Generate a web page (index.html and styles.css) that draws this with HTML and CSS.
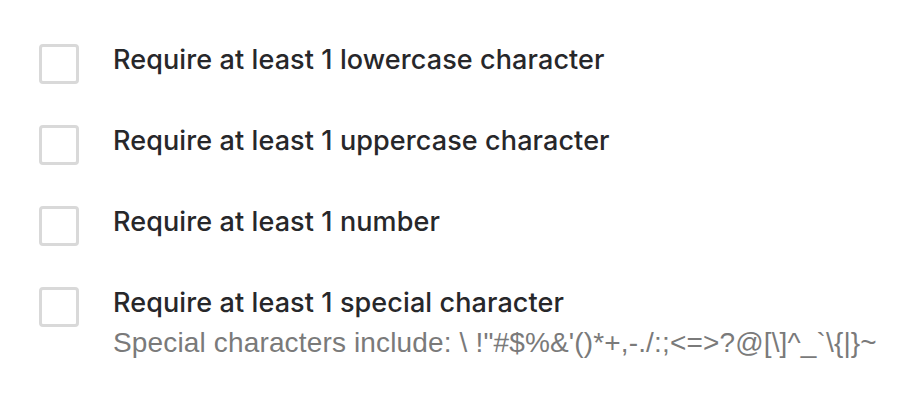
FILE: index.html
```html
<!DOCTYPE html>
<html>
<head>
<meta charset="utf-8">
<link rel="stylesheet" href="styles.css">
</head>
<body>
<ul class="rules">
  <li class="rule">
    <span class="box"></span>
    <div class="text">
      <div class="label">Require at least 1 lowercase character</div>
    </div>
  </li>
  <li class="rule">
    <span class="box"></span>
    <div class="text">
      <div class="label">Require at least 1 uppercase character</div>
    </div>
  </li>
  <li class="rule">
    <span class="box"></span>
    <div class="text">
      <div class="label">Require at least 1 number</div>
    </div>
  </li>
  <li class="rule">
    <span class="box"></span>
    <div class="text">
      <div class="label">Require at least 1 special character</div>
      <div class="hint">Special characters include: \ !"#$%&amp;'()*+,-./:;&lt;=&gt;?@[\]^_`\{|}~</div>
    </div>
  </li>
</ul>
</body>
</html>
```
FILE: styles.css
```css
html, body {
  margin: 0;
  padding: 0;
  background: #ffffff;
}
body {
  font-family: Inter, "Noto Sans", sans-serif;
}
.rules {
  list-style: none;
  margin: 0;
  padding: 44px 0 0 39px;
  display: flex;
  flex-direction: column;
  gap: 41px;
}
.rule {
  display: flex;
  align-items: flex-start;
  gap: 34px;
}
.box {
  flex: none;
  width: 34px;
  height: 34px;
  border: 3px solid #d9d9d9;
  border-radius: 4px;
}
.text {
  display: flex;
  flex-direction: column;
}
.label {
  font-size: 27px;
  font-weight: 500;
  line-height: 34px;
  color: #27272a;
  letter-spacing: 0.1px;
  margin-top: -1px;
}
.hint {
  font-family: "Liberation Sans", Arial, sans-serif;
  font-size: 28px;
  font-weight: 400;
  line-height: 34px;
  color: #7a7a7a;
  letter-spacing: 0.15px;
  margin-top: 6px;
}
```
